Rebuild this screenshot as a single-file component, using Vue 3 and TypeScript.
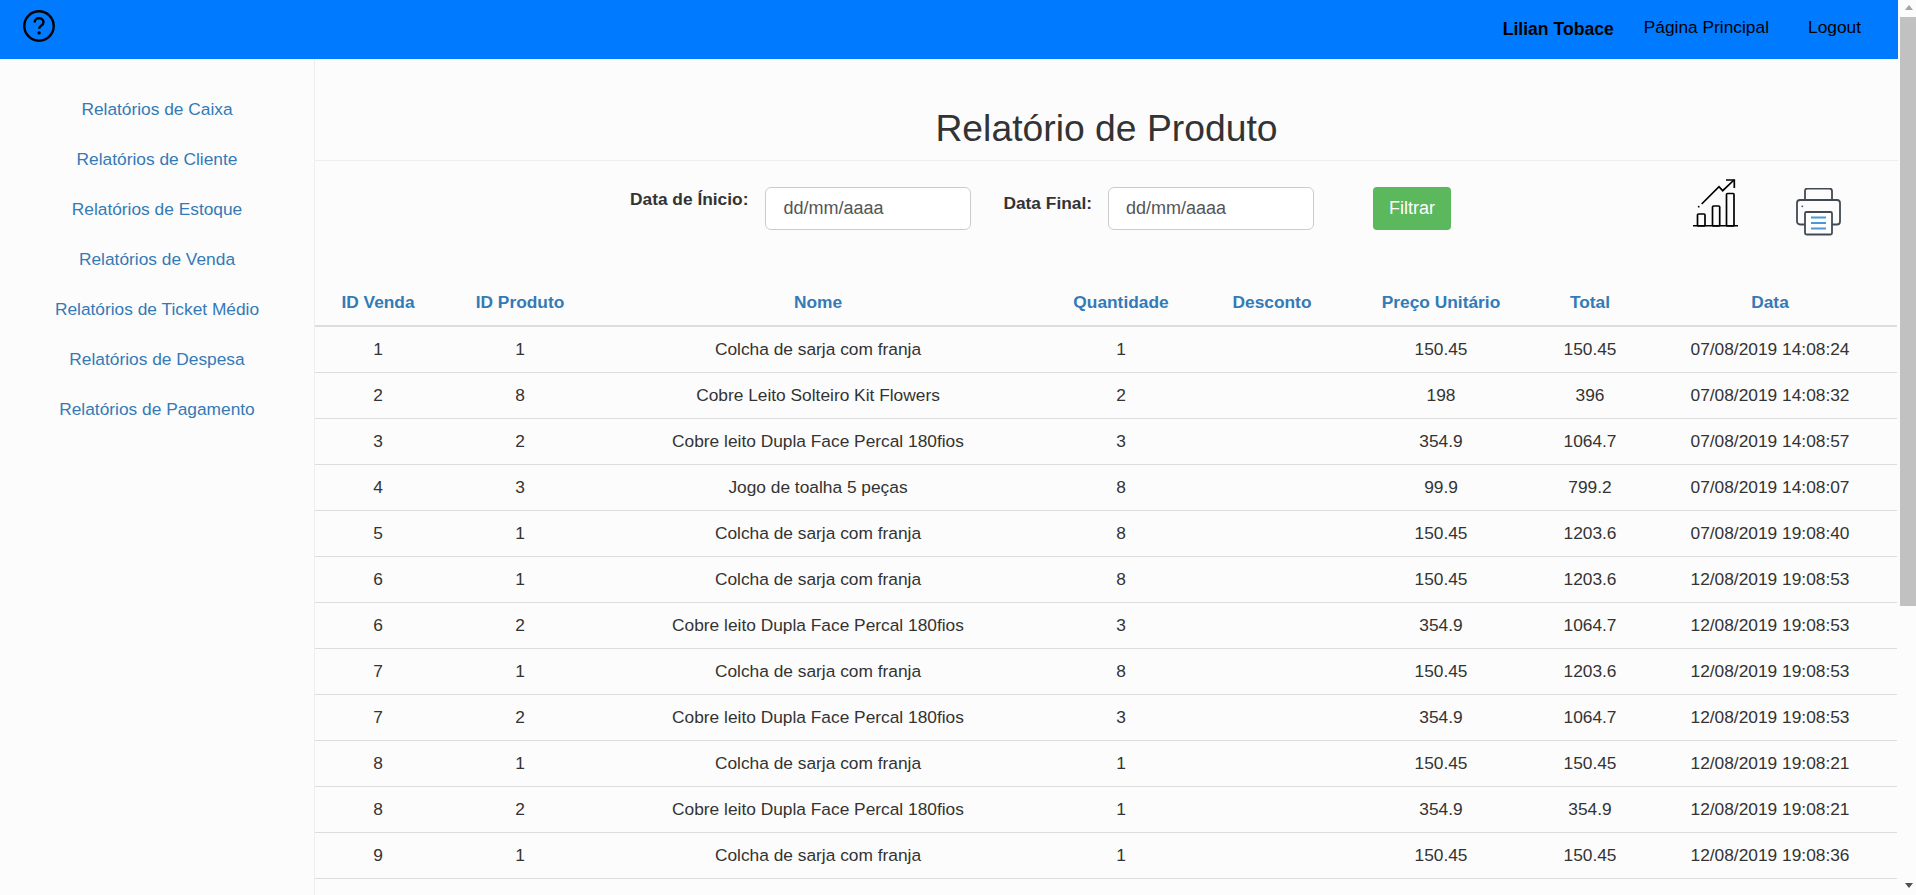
<template>
  <div class="page">
    <div class="main">
      <header class="topbar">
        <a class="help" aria-label="Ajuda">
          <svg width="34" height="34" viewBox="0 0 34 34" fill="none">
            <circle cx="17" cy="17" r="14.7" stroke="#000" stroke-width="2.4" />
            <path d="M12.6 13.6c0-2.6 2-4.3 4.5-4.3s4.4 1.6 4.4 3.9c0 3.4-4.4 3.4-4.4 6.6" stroke="#000" stroke-width="2.4" />
            <circle cx="17.1" cy="23.9" r="1.7" fill="#000" />
          </svg>
        </a>
        <nav class="topnav">
          <strong class="user">Lilian Tobace</strong>
          <a class="toplink home">Página Principal</a>
          <a class="toplink">Logout</a>
        </nav>
      </header>

      <div class="body">
        <aside class="sidebar">
          <a v-for="item in reports" :key="item" class="side-link">{{ item }}</a>
        </aside>

        <section class="content">
          <h1 class="title">Relatório de Produto</h1>

          <div class="toolbar">
            <form class="filters" @submit.prevent>
              <label class="start-label">Data de Ínicio:</label>
              <div class="date-input">dd/mm/aaaa</div>
              <label class="end-label">Data Final:</label>
              <div class="date-input">dd/mm/aaaa</div>
              <button class="filter-btn" type="submit">Filtrar</button>
            </form>

            <div class="tools">
              <svg class="chart-icon" width="46" height="48" viewBox="0 0 46 48" fill="none" stroke="#000" stroke-width="1.700">
                <path d="M0 46.700h45" stroke-width="1.600" />
                <rect x="4.500" y="35" width="7.500" height="12" rx="1" />
                <rect x="19.500" y="27" width="7.200" height="20" rx="1" />
                <rect x="33.500" y="14.500" width="7.500" height="32.500" rx="1" />
                <path d="M8.700 25 26 7.700l3.700 4L41 1" />
                <path d="M33 1h8.300v8" />
                <circle cx="5.700" cy="27.700" r=".9" fill="#000" stroke="none" />
              </svg>
              <svg class="print-icon" width="46" height="48" viewBox="0 0 46 48" fill="none" stroke="#434a54" stroke-width="1.800">
                <path d="M9 12V3a2.500 2.500 0 0 1 2.500-2.500h22A2.500 2.500 0 0 1 36 3v9" />
                <path d="M9 36.500H4a3 3 0 0 1-3-3V15a3 3 0 0 1 3-3h37a3 3 0 0 1 3 3v18.500a3 3 0 0 1-3 3h-5" />
                <rect x="9" y="24" width="27" height="22.500" rx="1.500" fill="#fff" />
                <path d="M15 29.500h15M15 35h15M15 40.500h15" stroke="#4a97dc" />
                <circle cx="6.300" cy="18.300" r=".9" fill="#434a54" stroke="none" />
              </svg>
            </div>
          </div>

          <table class="report">
            <colgroup>
              <col class="c-sale" />
              <col class="c-prod" />
              <col class="c-name" />
              <col class="c-qty" />
              <col class="c-disc" />
              <col class="c-price" />
              <col class="c-total" />
              <col />
            </colgroup>
            <thead>
              <tr>
                <th v-for="col in columns" :key="col">{{ col }}</th>
              </tr>
            </thead>
            <tbody>
              <tr v-for="(row, i) in rows" :key="i">
                <td>{{ row.sale }}</td>
                <td>{{ row.product }}</td>
                <td>{{ row.name }}</td>
                <td>{{ row.qty }}</td>
                <td></td>
                <td>{{ row.price }}</td>
                <td>{{ row.total }}</td>
                <td>{{ row.date }}</td>
              </tr>
            </tbody>
          </table>
        </section>
      </div>
    </div>

    <div class="scrollbar" aria-hidden="true">
      <div class="arrow up"></div>
      <div class="thumb"></div>
      <div class="track"></div>
      <div class="arrow down"></div>
    </div>
  </div>
</template>

<script setup lang="ts">
interface Row {
  sale: number
  product: number
  name: string
  qty: number
  price: string
  total: string
  date: string
}

const colcha = 'Colcha de sarja com franja'
const cobre = 'Cobre leito Dupla Face Percal 180fios'

const reports = [
  'Relatórios de Caixa',
  'Relatórios de Cliente',
  'Relatórios de Estoque',
  'Relatórios de Venda',
  'Relatórios de Ticket Médio',
  'Relatórios de Despesa',
  'Relatórios de Pagamento',
]

const columns = ['ID Venda', 'ID Produto', 'Nome', 'Quantidade', 'Desconto', 'Preço Unitário', 'Total', 'Data']

const rows: Row[] = [
  { sale: 1, product: 1, name: colcha, qty: 1, price: '150.45', total: '150.45', date: '07/08/2019 14:08:24' },
  { sale: 2, product: 8, name: 'Cobre Leito Solteiro Kit Flowers', qty: 2, price: '198', total: '396', date: '07/08/2019 14:08:32' },
  { sale: 3, product: 2, name: cobre, qty: 3, price: '354.9', total: '1064.7', date: '07/08/2019 14:08:57' },
  { sale: 4, product: 3, name: 'Jogo de toalha 5 peças', qty: 8, price: '99.9', total: '799.2', date: '07/08/2019 14:08:07' },
  { sale: 5, product: 1, name: colcha, qty: 8, price: '150.45', total: '1203.6', date: '07/08/2019 19:08:40' },
  { sale: 6, product: 1, name: colcha, qty: 8, price: '150.45', total: '1203.6', date: '12/08/2019 19:08:53' },
  { sale: 6, product: 2, name: cobre, qty: 3, price: '354.9', total: '1064.7', date: '12/08/2019 19:08:53' },
  { sale: 7, product: 1, name: colcha, qty: 8, price: '150.45', total: '1203.6', date: '12/08/2019 19:08:53' },
  { sale: 7, product: 2, name: cobre, qty: 3, price: '354.9', total: '1064.7', date: '12/08/2019 19:08:53' },
  { sale: 8, product: 1, name: colcha, qty: 1, price: '150.45', total: '150.45', date: '12/08/2019 19:08:21' },
  { sale: 8, product: 2, name: cobre, qty: 1, price: '354.9', total: '354.9', date: '12/08/2019 19:08:21' },
  { sale: 9, product: 1, name: colcha, qty: 1, price: '150.45', total: '150.45', date: '12/08/2019 19:08:36' },
  { sale: 9, product: 2, name: cobre, qty: 1, price: '354.9', total: '354.9', date: '12/08/2019 19:08:36' },
]
</script>

<style>
html,
body {
  margin: 0;
  overflow: hidden;
  background: #fcfcfc;
}
</style>

<style scoped>
.page {
  display: flex;
  height: 895px;
  overflow: hidden;
  font-family: "Liberation Sans", Arial, sans-serif;
  font-size: 17.33px;
  color: #333;
  background: #fcfcfc;
}
.main {
  width: 1898px;
  flex: none;
  display: flex;
  flex-direction: column;
}
.topbar {
  height: 59px;
  flex: none;
  display: flex;
  justify-content: space-between;
  background: #007bff;
}
.help {
  margin: 9px 0 0 22px;
  height: 34px;
}
.topnav {
  display: flex;
  align-items: flex-start;
  padding-right: 37px;
  color: #000;
}
.user {
  margin-top: 19px;
  font-size: 17.6px;
}
.toplink {
  margin-top: 17px;
  margin-left: 39px;
}
.home {
  margin-left: 30px;
}
.body {
  flex: 1;
  display: flex;
  min-height: 0;
}
.sidebar {
  width: 314px;
  flex: none;
  display: flex;
  flex-direction: column;
  gap: 30px;
  padding-top: 40px;
  border-right: 1px solid #eee;
  text-align: center;
}
.side-link {
  line-height: 20px;
  color: #337ab7;
}
.content {
  flex: 1;
  min-width: 0;
}
.title {
  margin: 0;
  height: 102px;
  padding-top: 47px;
  box-sizing: border-box;
  border-bottom: 1px solid #eee;
  text-align: center;
  font-size: 37.3px;
  font-weight: 500;
  line-height: 44px;
}
.toolbar {
  height: 132px;
  display: flex;
  align-items: flex-start;
  box-sizing: border-box;
}
.filters {
  display: flex;
  align-items: flex-start;
  margin: 26px 0 0 315px;
}
.filters label {
  font-weight: 700;
  line-height: 18px;
}
.start-label {
  margin: 3px 17px 0 0;
}
.end-label {
  margin: 7px 16px 0 32px;
}
.date-input {
  width: 206px;
  height: 43px;
  box-sizing: border-box;
  padding: 0 17px;
  border: 1px solid #ccc;
  border-radius: 6px;
  background: #fff;
  font-size: 18px;
  line-height: 41px;
  color: #555;
}
.filter-btn {
  width: 78px;
  height: 43px;
  margin-left: 59px;
  padding: 0;
  border: 0;
  border-radius: 4px;
  background: #5cb85c;
  color: #fff;
  font: inherit;
  font-size: 18px;
}
.tools {
  display: flex;
  align-items: flex-start;
  margin-left: 242px;
  padding-top: 18px;
}
.print-icon {
  margin: 9px 0 0 57px;
}
.report {
  width: 1582px;
  table-layout: fixed;
  border-collapse: collapse;
}
.c-sale {
  width: 126px;
}
.c-prod {
  width: 158px;
}
.c-name {
  width: 438px;
}
.c-qty {
  width: 168px;
}
.c-disc {
  width: 134px;
}
.c-price {
  width: 204px;
}
.c-total {
  width: 94px;
}
.report th {
  height: 0;
  padding: 0 0 14px;
  border-bottom: 2px solid #ddd;
  color: #337ab7;
  font-weight: 700;
  line-height: 18px;
  text-align: center;
}
.report td {
  height: 43px;
  padding: 0 0 2px;
  border-bottom: 1px solid #ddd;
  line-height: 18px;
  text-align: center;
}
.report th:last-child,
.report td:last-child {
  padding-left: 6px;
}
.scrollbar {
  width: 16px;
  margin-left: 2px;
  flex: none;
  display: flex;
  flex-direction: column;
}
.arrow {
  height: 17px;
  flex: none;
  box-sizing: border-box;
  display: flex;
  justify-content: center;
  padding-left: 1px;
}
.arrow::before {
  content: "";
  width: 0;
  height: 0;
  margin-top: 5px;
  border-left: 4.500px solid transparent;
  border-right: 4.500px solid transparent;
}
.up::before {
  border-bottom: 5px solid #a3a3a3;
}
.down::before {
  border-top: 5px solid #505050;
}
.thumb {
  height: 589px;
  flex: none;
  background: #c1c1c1;
}
.track {
  flex: 1;
}
</style>
